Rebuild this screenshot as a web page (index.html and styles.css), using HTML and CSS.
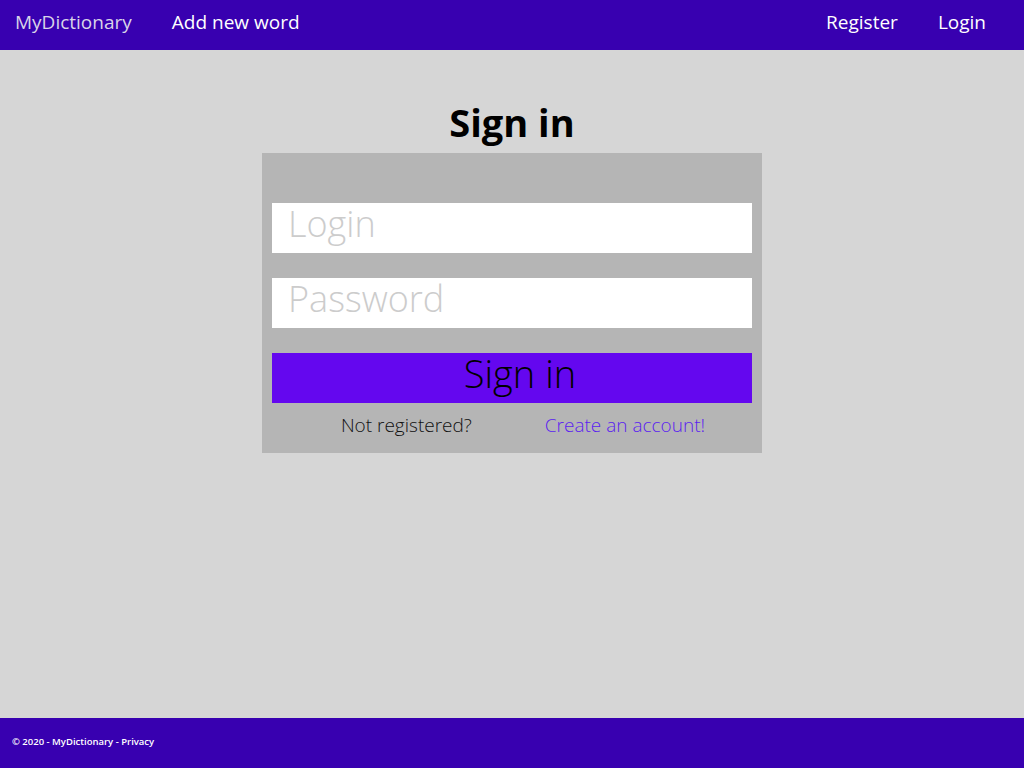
FILE: index.html
```html
<!DOCTYPE html>
<html>
<head>
<meta charset="utf-8">
<title>Sign in - MyDictionary</title>
<link rel="stylesheet" href="styles.css">
</head>
<body>
<header class="topbar">
  <nav class="nav-left">
    <a class="brand" href="#">MyDictionary</a>
    <a class="nav-link" href="#">Add new word</a>
  </nav>
  <nav class="nav-right">
    <a class="nav-link" href="#">Register</a>
    <a class="nav-link" href="#">Login</a>
  </nav>
</header>
<main class="main">
  <h1 class="title">Sign in</h1>
  <form class="card">
    <input class="field" type="text" placeholder="Login">
    <input class="field" type="password" placeholder="Password">
    <button class="submit" type="button">Sign in</button>
    <div class="register-row">
      <span class="muted">Not registered?</span>
      <a class="create" href="#">Create an account!</a>
    </div>
  </form>
</main>
<footer class="footer">
  <span>© 2020 - MyDictionary - <a href="#" class="footer-link">Privacy</a></span>
</footer>
</body>
</html>
```
FILE: styles.css
```css
* { box-sizing: border-box; }
html, body { height: 100%; }
body {
  margin: 0;
  background: #d6d6d6;
  font-family: "Open Sans", "Noto Sans", sans-serif;
  display: flex;
  flex-direction: column;
}
a { text-decoration: none; }
.topbar {
  height: 50px;
  background: #3800b0;
  display: flex;
  align-items: center;
  justify-content: space-between;
  padding: 0 38px 6px 15px;
}
.nav-left, .nav-right { display: flex; align-items: center; }
.nav-left { gap: 40px; }
.nav-right { gap: 40px; }
.brand {
  color: #d8d4e8;
  font-size: 19px;
}
.nav-link {
  color: #ffffff;
  font-size: 19px;
}
.main {
  flex: 1;
  display: flex;
  flex-direction: column;
  align-items: center;
}
.title {
  margin: 45px 0 0;
  font-size: 38px;
  font-weight: 700;
  line-height: 55px;
  padding-bottom: 3px;
  color: #000;
}
.card {
  width: 500px;
  background: #b5b5b5;
  padding: 50px 10px 0;
  height: 300px;
  display: flex;
  flex-direction: column;
}
.field {
  height: 50px;
  border: none;
  background: #fff;
  padding: 0 16px 9px;
  font-family: inherit;
  font-size: 36px;
  font-weight: 300;
  margin-bottom: 25px;
  outline: none;
}
.field::placeholder { color: #cccccc; }
.submit {
  height: 50px;
  border: none;
  background: #6407ef;
  color: #000;
  font-family: inherit;
  font-size: 38px;
  font-weight: 300;
  line-height: 40px;
  padding: 0 0 10px 16px;
}
.register-row {
  display: flex;
  justify-content: center;
  gap: 73px;
  margin-top: 9px;
  padding-left: 22px;
  font-size: 19px;
  font-weight: 300;
}
.muted { color: #111; }
.create { color: #5b1ef0; }
.footer {
  height: 50px;
  background: #3800b0;
  color: #fff;
  font-size: 9.5px;
  font-weight: 600;
  display: flex;
  align-items: center;
  padding: 0 12px 4px;
}
.footer-link { color: #fff; }
```
